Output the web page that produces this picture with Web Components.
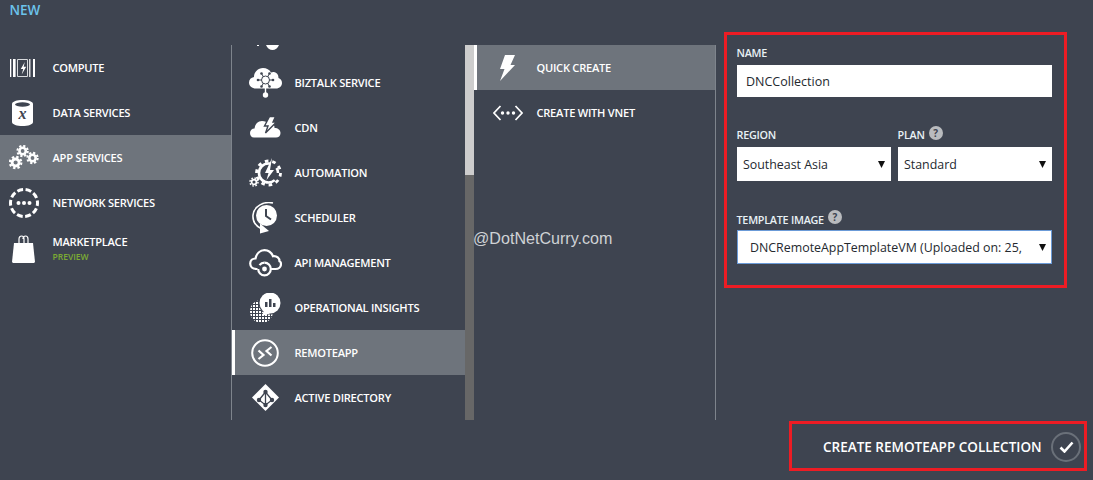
<!DOCTYPE html>
<html lang="en"><head><meta charset="utf-8"><title>New RemoteApp collection</title>
<style>
html,body{margin:0;padding:0;background:#3e4450}
body{width:1093px;height:480px;overflow:hidden;font-family:"Open Sans","Noto Sans",sans-serif}
svg{display:block}
</style></head><body>
<portal-shell>
  <nav-column slot="c1" style="--w:232px;--ico:44px;--gap:8.500px">
    <nav-item label="COMPUTE"><svg width="25" height="20" viewBox="0 0 25 20" fill="#fff"><path d="M0 1h1.300v18H0zM3 1h2.600v18H3zM19.200 1h1.200v18h-1.200zM23 1h2v18h-2z"/><path fill="none" stroke="#d8dadd" d="M7.500 1.500h10v17h-10z"/><path d="M14.800 4l-4 7h2.400l-1.500 5.500 4.500-7.800h-2.500z"/></svg></nav-item>
    <nav-item label="DATA SERVICES"><svg width="21" height="26" viewBox="0 0 21 26"><path fill="#fff" d="M0 4C0 1.500 5 0 10.500 0S21 1.500 21 4v18c0 2.500-5 4-10.500 4S0 24.500 0 22z"/><ellipse cx="10.500" cy="4.500" rx="7.500" ry="2.200" fill="#3e4450"/><text x="10.500" y="19" text-anchor="middle" font-family="Liberation Serif" font-style="italic" font-weight="700" font-size="16" fill="#3e4450">x</text></svg></nav-item>
    <nav-item label="APP SERVICES" active><svg style="margin-left:3px" width="30" height="25" viewBox="0 0 30 25" fill="none" stroke="#fff"><circle cx="6.600" cy="17.500" r="3.500" stroke-width="2.800"/><circle cx="6.600" cy="17.500" r="5.700" stroke-width="2.200" stroke-dasharray="2.400 2.070"/><circle cx="13.600" cy="6" r="3.200" stroke-width="2.600"/><circle cx="13.600" cy="6" r="5.200" stroke-width="2" stroke-dasharray="2.200 1.880"/><circle cx="23.500" cy="13" r="3.200" stroke-width="2.600"/><circle cx="23.500" cy="13" r="5.200" stroke-width="2" stroke-dasharray="2.200 1.880"/></svg></nav-item>
    <nav-item label="NETWORK SERVICES"><svg style="margin-left:3px" width="30" height="30" viewBox="0 0 30 30"><circle cx="15" cy="15" r="13.500" fill="none" stroke="#fff" stroke-width="3" stroke-dasharray="5.900 2.580" stroke-dashoffset="3"/><circle cx="9.500" cy="15" r="2" fill="#fff"/><circle cx="15" cy="15" r="2" fill="#fff"/><circle cx="20.500" cy="15" r="2" fill="#fff"/></svg></nav-item>
    <nav-item label="MARKETPLACE" sub="PREVIEW"><svg style="margin:2px 0 0 3px" width="23" height="28" viewBox="0 0 23 28"><path fill="#fff" d="M2 8h19l2 19-1 1H1l-1-1z"/><path fill="none" stroke="#fff" stroke-width="1.200" d="M7 11V4c0-4 5-4 5 0v7M11 4c0-4 5-4 5 0v7"/></svg></nav-item>
  </nav-column>
  <scroll-column slot="c2">
    <nav-column style="--w:233px;--ico:66px;--gap:-3.500px">
      <icon-stub><svg width="32" height="6" viewBox="0 0 32 6" fill="#fff"><path d="M13 0h13c-1 3-4 5-6.500 5S14 3 13 0z"/><path d="M4 0h2v1H4z"/></svg></icon-stub>
      <nav-item label="BIZTALK SERVICE"><svg width="33" height="31" viewBox="0 0 33 31"><path fill="#fff" d="M7 21.500C3 21.500 0 19 0 15.500 0 12.500 2 10.500 5 10c0-5 4-9 9-9 3.500 0 6.500 1.500 8 4.500 1-.5 2-.7 3-.5 3 .5 4.500 3 4.500 6 2 .5 3.500 2.500 3.500 5 0 3-2.500 5.500-6 5.500z"/><g stroke="#3e4450" stroke-width="1" fill="none"><circle cx="16.500" cy="13" r="4"/><path d="M9 13h3.500M20.500 13H24M12.500 6.500l2 3.500M20.500 6.500l-2 3.500M12.500 19.500l2-3.500M20.500 19.500l-2-3.500"/></g><g fill="#3e4450"><circle cx="9" cy="13" r="1.300"/><circle cx="24" cy="13" r="1.300"/><circle cx="12.500" cy="6.500" r="1.300"/><circle cx="20.500" cy="6.500" r="1.300"/><circle cx="12.500" cy="19.500" r="1.300"/><circle cx="20.500" cy="19.500" r="1.300"/></g><path stroke="#fff" stroke-width="1.400" d="M16.500 21v6"/><circle cx="16.500" cy="28" r="2.700" fill="#fff"/></svg></nav-item>
      <nav-item label="CDN"><svg width="31" height="21" viewBox="0 0 31 21"><path fill="#fff" d="M4 20.500C1.500 20.500 0 18.500 0 16c0-2.500 2-4.500 4.500-4.500C5 7 8 4 12 4c3 0 5 1 6.500 3 2-1 4-1 5 .5 1 1.200 1 2.500 1 3.500 3.500 0 6 2 6 5 0 3-2 4.500-4.500 4.500z"/><path fill="#fff" stroke="#3e4450" stroke-width="1.400" stroke-linejoin="miter" d="M19.500 -.5h6l-2.500 5.500h3.500L15.500 16l2.500-7h-3.500z"/></svg></nav-item>
      <nav-item label="AUTOMATION"><svg width="33" height="29" viewBox="0 0 33 29" fill="none" stroke="#fff"><circle cx="19.500" cy="15" r="9.500" stroke-width="2.600" stroke-dasharray="38 8" stroke-dashoffset="-8"/><circle cx="19.500" cy="15" r="12" stroke-width="2.800" stroke-dasharray="3.600 3.900"/><circle cx="5" cy="24" r="2.400" stroke-width="1.700"/><circle cx="5" cy="24" r="4" stroke-width="1.500" stroke-dasharray="1.600 1.540"/><path fill="#fff" stroke="none" d="M23 0l-7 15h3.500l-2 7 7.500-10h-4z"/></svg></nav-item>
      <nav-item label="SCHEDULER"><svg width="26" height="32" viewBox="0 0 26 32" fill="none"><circle cx="14.500" cy="13.500" r="10.500" fill="#fff"/><path d="M14 7v7l5 3.500" stroke="#3e4450" stroke-width="2"/><path d="M21 1C12 -1 2 4 1 13c-.5 6 3 11 8 13.500" stroke="#fff" stroke-width="1.600"/><path fill="#fff" d="M8 21.500l9 7.500-9 2.500z"/></svg></nav-item>
      <nav-item label="API MANAGEMENT"><svg width="33" height="28" viewBox="0 0 33 28" fill="none" stroke="#fff" stroke-width="2.200"><path d="M8.500 20H7.500C3.500 20 1.200 17.500 1.200 14.500S3.500 9.500 6.500 9.500C7.500 4.500 11 1.200 15.500 1.200c4 0 7 2.500 8.500 6 4-.5 6.500 2 6.500 5 1.500.5 1.500 1.500 1.500 2.800 0 3-2.500 5-5.500 5H21"/><path d="M9.200 20a6.300 6.300 0 1 0 6.300-6.300"/><path d="M15.500 13.700a6.300 6.300 0 0 0-5 2.500"/><circle cx="15.500" cy="20" r="2.400" fill="#fff" stroke="none"/></svg></nav-item>
      <nav-item label="OPERATIONAL INSIGHTS"><svg width="31" height="30" viewBox="0 0 31 30"><defs><pattern id="dp" width="3" height="3" patternUnits="userSpaceOnUse"><rect width="2" height="2" fill="#fff"/></pattern></defs><circle cx="11.500" cy="18.500" r="11.500" fill="url(#dp)"/><circle cx="20" cy="10" r="11.500" fill="#3e4450"/><circle cx="20" cy="10" r="10.500" fill="#fff"/><path d="M20 20.500L12 23l2-6z" fill="#fff"/><path fill="#3e4450" d="M15 9h2.500v5H15zM19 6h2.500v8H19zM23 10h2.500v4H23z"/></svg></nav-item>
      <nav-item label="REMOTEAPP" active><svg width="28" height="28" viewBox="0 0 28 28" fill="none" stroke="#fff"><circle cx="14" cy="14" r="12.800" stroke-width="2"/><path stroke-width="2.200" d="M7.500 11.500l5 4.500-5 4M20.500 8l-5 4 5 4.500"/></svg></nav-item>
      <nav-item label="ACTIVE DIRECTORY"><svg width="27" height="27" viewBox="0 0 27 27"><path fill="#fff" d="M13.500 0L27 13.500 13.500 27 0 13.500z"/><g stroke="#3e4450" stroke-width="1.300" fill="none"><path d="M13.500 8L7 16l6.500 5L20 16zM13.500 8v13"/></g><g fill="#3e4450"><circle cx="13.500" cy="8" r="2.200"/><circle cx="7" cy="16" r="2.200"/><circle cx="20" cy="16" r="2.200"/><circle cx="13.500" cy="21" r="2.200"/></g></svg></nav-item>
    </nav-column>
  </scroll-column>
  <nav-column slot="c3" style="--w:242px;--ico:67px;--gap:-4.500px">
    <nav-item label="QUICK CREATE" active><svg width="15" height="26" viewBox="0 0 15 26"><path fill="#fff" d="M5 0h10L10.500 10H15L0 26l4.500-12H0z"/></svg></nav-item>
    <nav-item label="CREATE WITH VNET"><svg width="30" height="16" viewBox="0 0 30 16" fill="none" stroke="#fff" stroke-width="1.700"><path d="M7.500 1L1 8l6.500 7M22.500 1L29 8l-6.500 7"/><g fill="#fff" stroke="none"><circle cx="9.500" cy="8" r="1.700"/><circle cx="15" cy="8" r="1.700"/><circle cx="20.500" cy="8" r="1.700"/></g></svg></nav-item>
  </nav-column>
  <form-panel slot="form">
    <form-field label="NAME" class="n" style="grid-column:1/3"><text-box value="DNCCollection"></text-box></form-field>
    <form-field label="REGION"><pick-box value="Southeast Asia"></pick-box></form-field>
    <form-field label="PLAN" help><pick-box value="Standard"></pick-box></form-field>
    <form-field label="TEMPLATE IMAGE" class="t" help style="grid-column:1/3"><pick-box focus value="DNCRemoteAppTemplateVM (Uploaded on: 25,"></pick-box></form-field>
  </form-panel>
  <wizard-footer slot="footer" label="CREATE REMOTEAPP COLLECTION"></wizard-footer>
</portal-shell>
<script>
function el(name, css, html){
  customElements.define(name, class extends HTMLElement{
    connectedCallback(){
      if(this.shadowRoot) return;
      const r=this.attachShadow({mode:"open"});
      const a=n=>this.getAttribute(n)||"";
      const has=n=>this.hasAttribute(n);
      r.innerHTML="<style>"+css+"</style>"+(typeof html==="function"?html(a,has):html);
    }
  });
}
el("portal-shell",`
:host{display:block;width:1093px;height:480px;position:relative;background:#3e4450;color:#fff;font-family:"Open Sans","Noto Sans",sans-serif}
.new{height:45px;box-sizing:border-box;padding:0 0 0 9.500px;font-size:13.500px;font-weight:600;color:#6cc3ec;line-height:20px}
.row{display:flex;height:375px;align-items:stretch}
.formwrap{margin:-13px 0 0 8px}
.foot{display:flex;justify-content:flex-end;padding:1px 6px 0 0}
.wm{position:absolute;left:473px;top:229px;font:16.100px "Liberation Sans",Arial,sans-serif;color:#cfd2d5;line-height:18px}
`,`<div class="new">NEW</div>
<div class="row"><slot name="c1"></slot><slot name="c2"></slot><slot name="c3"></slot><div class="formwrap"><slot name="form"></slot></div></div>
<div class="foot"><slot name="footer"></slot></div>
<div class="wm">@DotNetCurry.com</div>`);
el("nav-column",`
:host{display:flex;flex-direction:column;box-sizing:border-box;width:var(--w);height:375px;overflow:hidden;flex:none}
:host([slot=c1]),:host([slot=c3]){border-right:1px solid #7e848c}
`,`<slot></slot>`);
el("nav-item",`
:host{display:flex;height:45px;flex:none;align-items:center;color:#fff}
:host([active]){background:#6e747c}
.mark{width:3px;align-self:stretch;flex:none;margin-right:-3px;background:transparent}
:host([active]) .mark{background:#fff}
:host([label="APP SERVICES"]) .mark{background:transparent}
.ico{width:var(--ico);flex:none;display:flex;justify-content:center;align-items:center;margin-right:var(--gap)}
.t{font-size:11.100px;font-weight:600;line-height:14px;white-space:nowrap;letter-spacing:-.25px}
.s{font-size:8.500px;font-weight:600;color:#7cab33;line-height:11px;margin-top:2px}
.sub{padding-top:2px}
`,(a)=>`<span class="mark"></span><span class="ico"><slot></slot></span><span class="${a("sub")?"sub":""}"><div class="t">${a("label")}</div>${a("sub")?`<div class="s">${a("sub")}</div>`:""}</span>`);
el("icon-stub",`
:host{display:flex;height:15px;flex:none;align-items:flex-start;padding-left:21px}
`,`<slot></slot>`);
el("scroll-column",`
:host{display:flex;width:242px;height:375px;flex:none}
.bar{width:9px;height:375px;background:linear-gradient(#cdcdcd 0 130px,#676767 130px)}
`,`<slot></slot><div class="bar"></div>`);
el("form-panel",`
:host{display:grid;box-sizing:border-box;width:343px;height:256px;border:3px solid #ed1c24;padding:10px 12px 0 10px;grid-template-columns:154px 154px;column-gap:7px;align-content:start}
`,`<slot></slot>`);
el("form-field",`
:host{display:block;margin-bottom:29px}
:host(.n){margin-bottom:30px}
.l{display:flex;align-items:center;gap:4px;height:16px;font-size:10.800px;font-weight:600;color:#e8f1f5;white-space:nowrap;margin:-1px 0 5px -.5px;letter-spacing:-.25px}
:host(.t) .l{margin:1px 0 3px -.5px}
.h{width:14px;height:14px;border-radius:50%;background:#b9bbbe;color:#3e4450;font:700 10px/14px "Open Sans",sans-serif;text-align:center;margin-top:-2px;letter-spacing:0}
:host(.t) .h{margin-top:-4px}
`,(a,has)=>`<div class="l"><span>${a("label")}</span>${has("help")?`<span class="h">?</span>`:""}</div><slot></slot>`);
el("text-box",`
:host{display:block;box-sizing:border-box;height:32px;background:#fff;color:#24292f;padding:0 9px;font-size:12.500px;line-height:34px;white-space:nowrap;overflow:hidden}
`,(a)=>a("value"));
el("pick-box",`
:host{display:flex;align-items:center;justify-content:space-between;box-sizing:border-box;height:34px;background:#fff;color:#24292f;padding:0 6.500px 0 6px;font-size:12.400px;white-space:nowrap;overflow:hidden}
:host([focus]){border:1px solid #6b9bd8;padding:1px 5.500px 0 12px;margin-top:1px}
svg{display:block;flex:none}
`,(a)=>`<span>${a("value")}</span><svg width="7" height="7" viewBox="0 0 7 7"><path d="M0 0h7L3.500 7z" fill="#111"/></svg>`);
el("wizard-footer",`
:host{display:flex;align-items:center;box-sizing:border-box;width:298px;height:50px;border:3px solid #ed1c24;padding:2px 3px 0 31px;color:#fff}
.t{font-size:13.500px;font-weight:600;white-space:nowrap;flex:1}
.c{width:30px;height:30px;box-sizing:border-box;border:2px solid #6a7079;border-radius:50%;display:flex;align-items:center;justify-content:center}
`,(a)=>`<span class="t">${a("label")}</span><span class="c"><svg width="15" height="12" viewBox="0 0 15 12"><path d="M1.500 6.500l4 4L13.500 1.500" fill="none" stroke="#fff" stroke-width="2.600"/></svg></span>`);
</script>
</body></html>
